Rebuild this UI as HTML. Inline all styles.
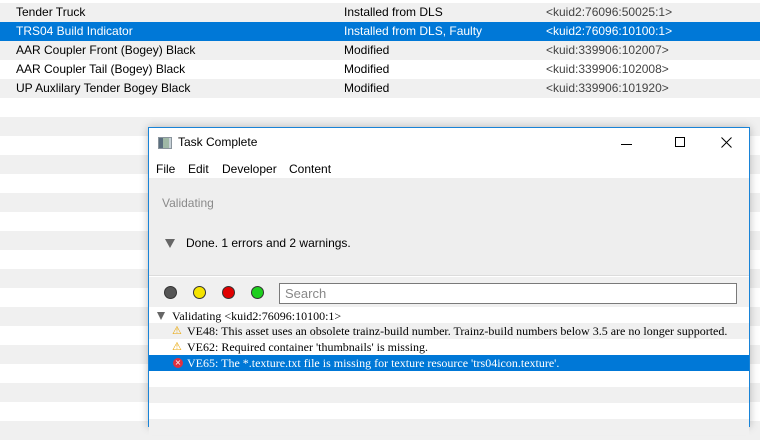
<!DOCTYPE html>
<html><head><style>
*{margin:0;padding:0;box-sizing:border-box}
body{width:760px;height:427px;overflow:hidden;position:relative;background:#fff;font-family:"Liberation Sans",sans-serif;font-size:12px;color:#000}
.r{position:absolute;left:0;width:760px;height:19px;line-height:19px}
.g{background:#f0f0f0}
.s{background:#0078d7;color:#fff}
.r span{position:absolute}
.k{color:#444}
.s .k{color:#fff}
#dlg{position:absolute;left:148px;top:127px;width:602px;height:300px;background:#fff;border:1px solid #1883d7;border-bottom:none;box-shadow:0 0 8px rgba(0,0,0,.25)}
.lr{position:absolute;left:0;width:600px;height:16px;line-height:16px;font-family:"Liberation Serif",serif;font-size:12px}
.m{position:absolute;top:34px}
</style></head><body>
<div class="r g" style="top:3px"><span style="left:16px">Tender Truck</span><span style="left:344px">Installed from DLS</span><span class="k" style="left:546px">&lt;kuid2:76096:50025:1&gt;</span></div>
<div class="r s" style="top:22px"><span style="left:16px">TRS04 Build Indicator</span><span style="left:344px">Installed from DLS, Faulty</span><span class="k" style="left:546px">&lt;kuid2:76096:10100:1&gt;</span></div>
<div class="r g" style="top:41px"><span style="left:16px">AAR Coupler Front (Bogey) Black</span><span style="left:344px">Modified</span><span class="k" style="left:546px">&lt;kuid:339906:102007&gt;</span></div>
<div class="r" style="top:60px"><span style="left:16px">AAR Coupler Tail (Bogey) Black</span><span style="left:344px">Modified</span><span class="k" style="left:546px">&lt;kuid:339906:102008&gt;</span></div>
<div class="r g" style="top:79px"><span style="left:16px">UP Auxlilary Tender Bogey Black</span><span style="left:344px">Modified</span><span class="k" style="left:546px">&lt;kuid:339906:101920&gt;</span></div>
<div class="r g" style="top:117px"></div><div class="r g" style="top:155px"></div><div class="r g" style="top:193px"></div><div class="r g" style="top:231px"></div><div class="r g" style="top:269px"></div><div class="r g" style="top:307px"></div><div class="r g" style="top:345px"></div><div class="r g" style="top:383px"></div><div class="r g" style="top:421px"></div>

<div id="dlg">
 <div style="position:absolute;left:9px;top:9px;width:14px;height:12px;background:linear-gradient(90deg,#5a6e7e 0 4px,#9fb8a6 4px 10px,#c8d2d8 10px);border:1px solid #8a949c"></div>
 <div style="position:absolute;left:29px;top:7px;font-size:12px">Task Complete</div>
 <div style="position:absolute;left:472px;top:16px;width:11px;height:1px;background:#000"></div>
 <div style="position:absolute;left:526px;top:9px;width:10px;height:10px;border:1px solid #000"></div>
 <svg style="position:absolute;left:572px;top:9px" width="11" height="11"><path d="M0.5 0.5L10.5 10.5M10.5 0.5L0.5 10.5" stroke="#000" stroke-width="1"/></svg>
 <div class="m" style="left:7px">File</div>
 <div class="m" style="left:39px">Edit</div>
 <div class="m" style="left:73px">Developer</div>
 <div class="m" style="left:140px">Content</div>
 <div style="position:absolute;left:0;top:50px;width:600px;height:98px;background:#eeeeee;border-bottom:1px solid #dcdcdc"></div>
 <div style="position:absolute;left:13px;top:68px;color:#8a8a8a">Validating</div>
 <div style="position:absolute;left:16px;top:111px;width:0;height:0;border-left:5px solid transparent;border-right:5px solid transparent;border-top:9px solid #666"></div>
 <div style="position:absolute;left:37px;top:108px">Done. 1 errors and 2 warnings.</div>
 <div style="position:absolute;left:0;top:149px;width:600px;height:30px;background:#f0f0f0"></div>
 <div style="position:absolute;left:15px;top:158px;width:13px;height:13px;border-radius:50%;background:#555;border:1px solid #333"></div>
 <div style="position:absolute;left:44px;top:158px;width:13px;height:13px;border-radius:50%;background:#f5e400;border:1px solid #333"></div>
 <div style="position:absolute;left:73px;top:158px;width:13px;height:13px;border-radius:50%;background:#e00000;border:1px solid #333"></div>
 <div style="position:absolute;left:102px;top:158px;width:13px;height:13px;border-radius:50%;background:#1ecf1e;border:1px solid #333"></div>
 <div style="position:absolute;left:130px;top:155px;width:458px;height:21px;background:#fff;border:1px solid #7a7a7a;color:#888;padding-left:5px;line-height:19px;font-size:13px">Search</div>
 <div class="lr" style="top:180px"><span style="position:absolute;left:8px;top:4px;width:0;height:0;border-left:4px solid transparent;border-right:4px solid transparent;border-top:8px solid #666"></span><span style="position:absolute;left:23px">Validating &lt;kuid2:76096:10100:1&gt;</span></div>
 <div class="lr" style="top:195px;background:#f0f0f0"><span style="position:absolute;left:23px;color:#e8a400;font-family:'DejaVu Sans';font-size:11px">⚠</span><span style="position:absolute;left:38px">VE48: This asset uses an obsolete trainz-build number. Trainz-build numbers below 3.5 are no longer supported.</span></div>
 <div class="lr" style="top:211px"><span style="position:absolute;left:23px;color:#e8a400;font-family:'DejaVu Sans';font-size:11px">⚠</span><span style="position:absolute;left:38px">VE62: Required container 'thumbnails' is missing.</span></div>
 <div class="lr" style="top:227px;background:#0078d7;color:#fff"><span style="position:absolute;left:24px;top:3px;width:10px;height:10px;border-radius:50%;background:#e03040;color:#fff;font-size:8px;line-height:10px;text-align:center;font-family:'DejaVu Sans'">×</span><span style="position:absolute;left:38px">VE65: The *.texture.txt file is missing for texture resource 'trs04icon.texture'.</span></div>
 <div class="lr" style="top:259px;background:#f0f0f0"></div>
 <div class="lr" style="top:291px;background:#f0f0f0"></div>
</div>
</body></html>
